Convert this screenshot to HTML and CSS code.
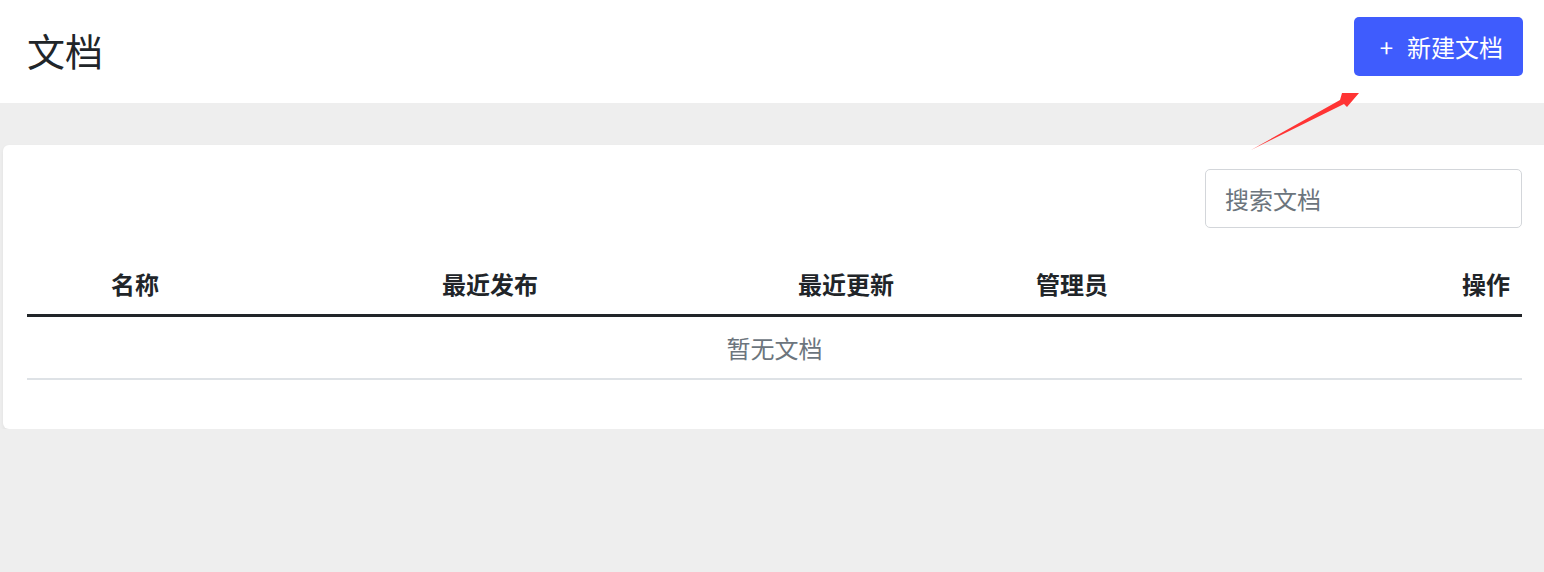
FILE: index.html
```html
<!DOCTYPE html>
<html lang="zh-CN">
<head>
  <meta charset="UTF-8" />
  <title>文档</title>
  <link rel="stylesheet" href="styles.css">
</head>
<body>

  <div class="header">
    <h1>文档</h1>
    <button class="btn-new"><span class="plus">+</span>新建文档</button>
  </div>

  <div class="card">
    <div class="toolbar">
      <input type="text" class="search" placeholder="搜索文档" />
    </div>

    <div class="table">
      <div class="thead">
        <div>名称</div>
        <div>最近发布</div>
        <div>最近更新</div>
        <div>管理员</div>
        <div class="right">操作</div>
      </div>
      <div class="empty">暂无文档</div>
    </div>
  </div>

  <!-- annotation arrow pointing at the button -->
  <svg class="arrow" width="1544" height="572" viewBox="0 0 1544 572">
    <polygon points="1251,150 1340,100 1342,93 1359,93 1347,107 1344,104" fill="#ff3434" />
  </svg>

</body>
</html>
```

FILE: styles.css
```css
body {
  margin: 0;
  background-color: #eeeeee;
  font-family: "Noto Sans CJK SC", "Noto Sans", Arial, sans-serif;
  color: #212529;
}
.header {
  background-color: white;
  height: 103px;
  display: flex;
  align-items: center;
  justify-content: space-between;
  padding: 0 21px 0 27px;
  box-sizing: border-box;
}
.header h1 {
  margin: -4px 0 0 0;
  font-size: 38px;
  font-weight: normal;
  line-height: 1;
}
.btn-new {
  height: 59px;
  margin-top: -10px;
  padding: 0 20px 0 26px;
  background-color: #3f5cfd;
  color: white;
  font-family: inherit;
  font-size: 24px;
  border: none;
  border-radius: 5px;
  display: flex;
  align-items: center;
  cursor: pointer;
}
.btn-new .plus { margin-right: 14px; }
.card {
  background-color: white;
  margin: 42px 0 0 3px;
  padding: 24px 22px 49px 24px;
  border-radius: 6px 0 0 6px;
  box-shadow: 0 2px 4px rgba(0, 0, 0, 0.06);
}
.toolbar {
  display: flex;
  justify-content: flex-end;
}
.search {
  width: 317px;
  height: 59px;
  box-sizing: border-box;
  padding: 0 19px;
  border: 1px solid #d3d6da;
  border-radius: 5px;
  font-family: inherit;
  font-size: 24px;
  color: #212529;
}
.search::placeholder { color: #6c757d; }
.table { margin-top: 24px; }
.thead {
  display: grid;
  grid-template-columns: 216px 494px 218px 234px 1fr;
  height: 62px;
  align-items: center;
  border-bottom: 3px solid #212529;
  font-size: 24px;
  font-weight: bold;
  text-align: center;
}
.thead .right { text-align: right; padding-right: 12px; }
.empty {
  height: 61px;
  line-height: 61px;
  text-align: center;
  font-size: 24px;
  color: #6c757d;
  border-bottom: 2px solid #dee2e6;
}
.arrow {
  position: absolute;
  left: 0;
  top: 0;
  pointer-events: none;
}
```
